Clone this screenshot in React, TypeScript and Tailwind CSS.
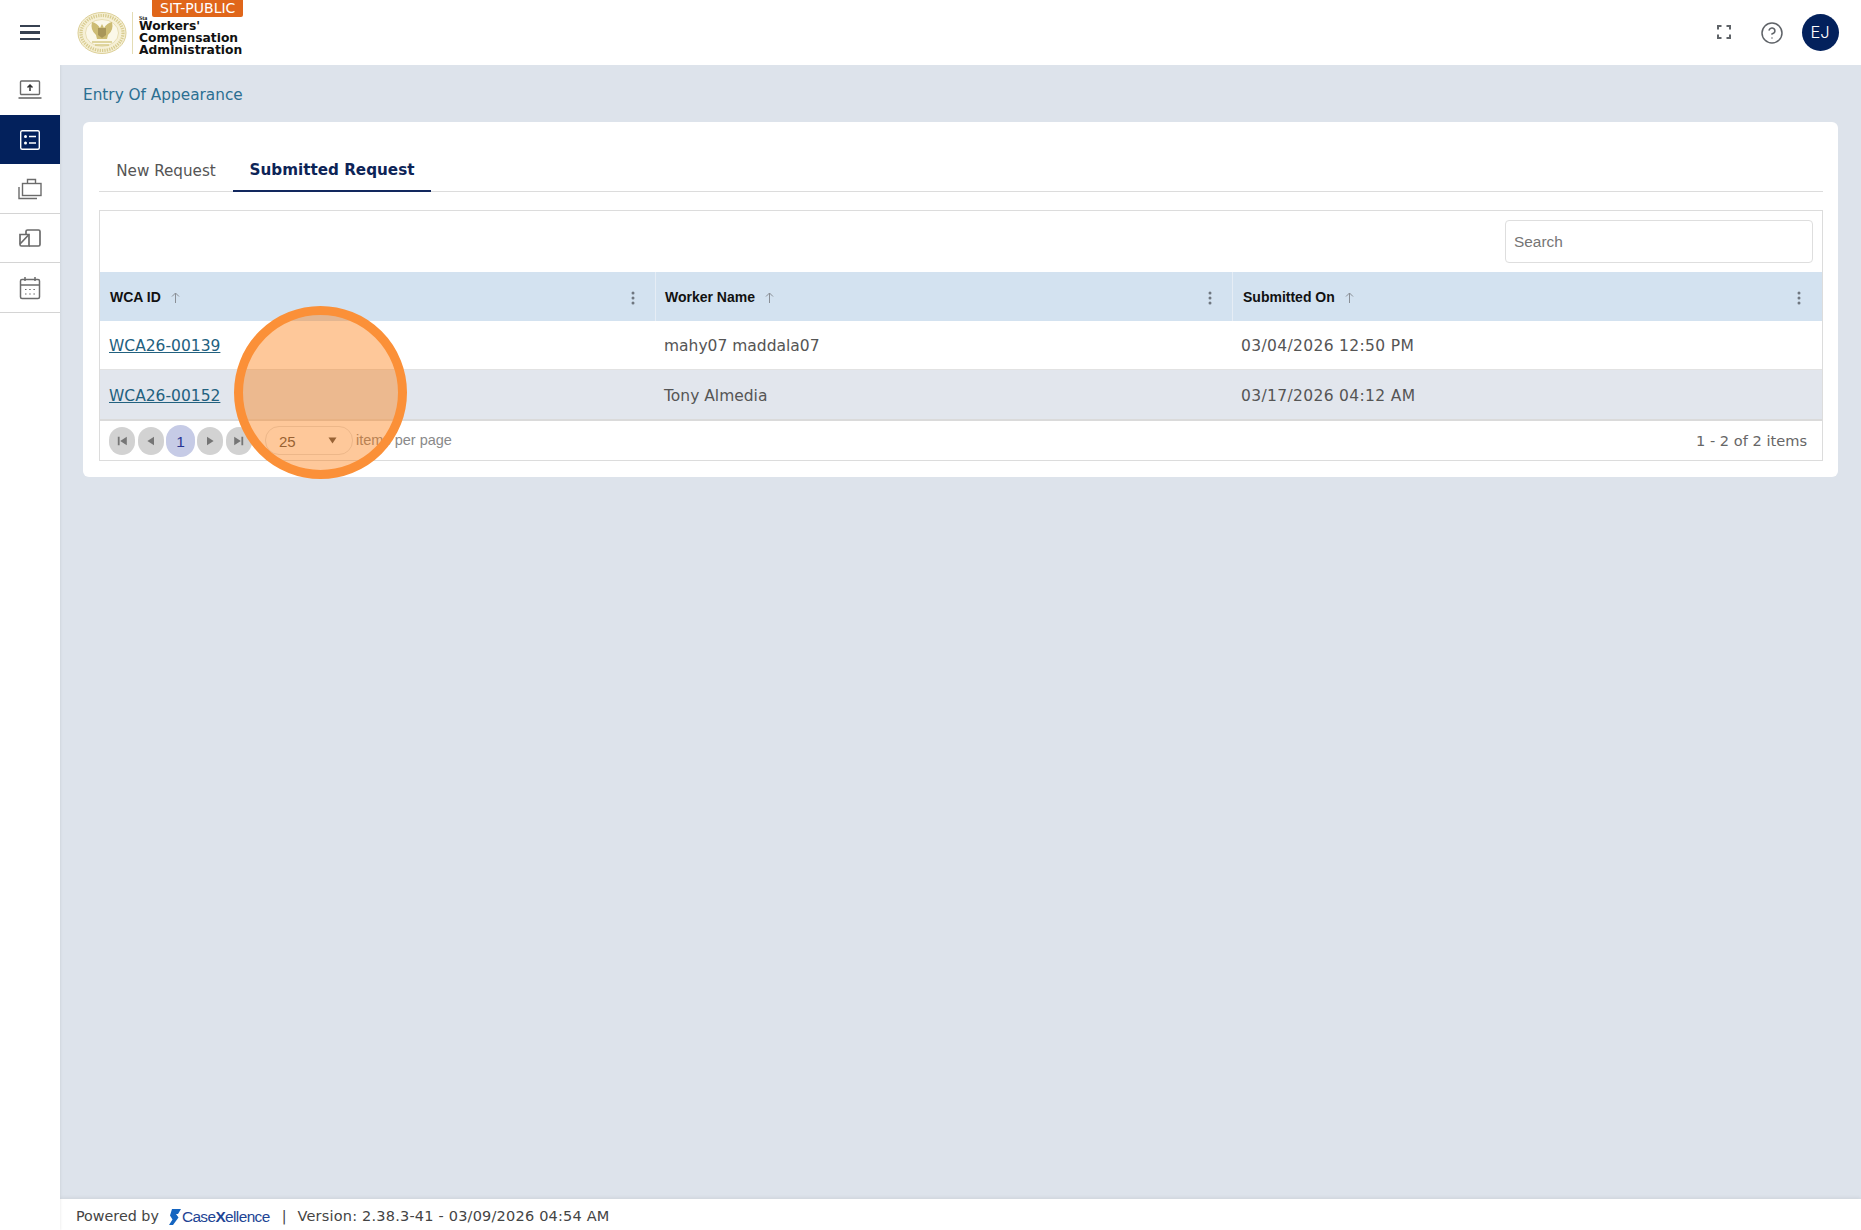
import { CircleHelp } from 'lucide-react';

const dejavu = "font-['DejaVu_Sans',sans-serif]";
const arial = "font-['Liberation_Sans',Arial,sans-serif]";

function SealLogo() {
  return (
    <svg width="50" height="44" viewBox="0 0 50 44" className="shrink-0">
      <ellipse cx="25" cy="22" rx="24" ry="20.5" fill="#f6f0d6" stroke="#dccf96" strokeWidth="1" />
      <ellipse cx="25" cy="22" rx="21" ry="17.5" fill="none" stroke="#d8cc90" strokeWidth="3.2" strokeDasharray="1.3 1.1" />
      <ellipse cx="25" cy="22" rx="16.5" ry="13.5" fill="#fbf8e9" stroke="#dccf96" strokeWidth="0.6" />
      <path d="M15 11 Q20 12 23 17 L25 13 L27 17 Q30 12 35 11 Q37 19 31 24 L30 28 H20 L19 24 Q13 19 15 11 Z" fill="#cdbc74" />
      <path d="M21 17 H29 V24 L25 27 L21 24 Z" fill="#a8965a" />
      <path d="M15 31 H35 M18 34 H32" stroke="#d6c985" strokeWidth="1.6" />
    </svg>
  );
}

function Sidebar() {
  return (
    <aside className="z-10 flex w-[60px] shrink-0 flex-col bg-white shadow-[1px_0_2px_rgba(0,0,0,0.06)]">
      <div className="flex h-[50px] items-center justify-center">
        <svg width="24" height="20" viewBox="0 0 24 20" fill="none" stroke="#6b6b6b" strokeWidth="1.4">
          <rect x="2.5" y="1" width="19" height="13.5" rx="1" />
          <path d="M0.5 18 H23.5" strokeWidth="1.6" />
          <path d="M12 11 V5 M9.5 7.5 L12 5 L14.5 7.5" stroke="#333" strokeWidth="1.5" />
        </svg>
      </div>
      <div className="flex h-[49px] items-center justify-center bg-[#03215c]">
        <svg width="22" height="22" viewBox="0 0 22 22" fill="none" stroke="white" strokeWidth="1.4">
          <rect x="1.7" y="1.7" width="18.6" height="18.6" rx="1.5" />
          <circle cx="6.5" cy="7.5" r="1.5" fill="white" stroke="none" />
          <circle cx="6.5" cy="14" r="1.5" fill="white" stroke="none" />
          <path d="M10 7.5 H17 M10 14 H17" />
        </svg>
      </div>
      <div className="flex h-[50px] items-center justify-center border-b border-[#d4d4d4]">
        <svg width="24" height="22" viewBox="0 0 24 22" fill="none" stroke="#6b6b6b" strokeWidth="1.4">
          <rect x="4.5" y="5.5" width="18.5" height="12" />
          <path d="M9.5 5.5 V1.5 H17.5 V5.5" />
          <path d="M1 9 V20.5 H19" />
        </svg>
      </div>
      <div className="flex h-[49px] items-center justify-center border-b border-[#d4d4d4]">
        <svg width="22" height="18" viewBox="0 0 22 18" fill="none" stroke="#6b6b6b" strokeWidth="1.7">
          <path d="M1 5.5 H10 V17 H2.5 Q1 17 1 15.5 Z" />
          <path d="M7 5.5 V2.5 Q7 1 8.5 1 H19.5 Q21 1 21 2.5 V15.5 Q21 17 19.5 17 H10" />
          <path d="M1 15 L9.5 6" />
        </svg>
      </div>
      <div className="flex h-[50px] items-center justify-center border-b border-[#d4d4d4]">
        <svg width="22" height="24" viewBox="0 0 22 24" fill="none" stroke="#6b6b6b" strokeWidth="1.5">
          <rect x="1.5" y="3.5" width="19" height="19" rx="1.5" />
          <path d="M1.5 9 H20.5" />
          <path d="M6 1 V5 M16 1 V5" />
          <path d="M6 13.5 H7.5 M10.2 13.5 H11.7 M14.4 13.5 H15.9 M6 18 H7.5 M10.2 18 H11.7 M14.4 18 H15.9" strokeWidth="1.2" />
        </svg>
      </div>
    </aside>
  );
}

function SortArrow() {
  return (
    <svg width="9" height="11" viewBox="0 0 9 11" fill="none" stroke="#8a8f96" strokeWidth="1" className="ml-[10px]">
      <path d="M4.5 11 V1 M1 4.5 L4.5 1 L8 4.5" />
    </svg>
  );
}

function Kebab() {
  return (
    <svg width="4" height="14" viewBox="0 0 4 14" fill="#6f7780">
      <circle cx="2" cy="2" r="1.5" />
      <circle cx="2" cy="7" r="1.5" />
      <circle cx="2" cy="12" r="1.5" />
    </svg>
  );
}

function HeaderCell({ label, className }: { label: string; className: string }) {
  return (
    <div className={`flex h-full items-center pt-[2px] ${className}`}>
      <span className={`${arial} text-[14px] font-bold text-[#111]`}>{label}</span>
      <SortArrow />
      <span className="ml-auto">
        <Kebab />
      </span>
    </div>
  );
}

function PagerButton({ d }: { d: string }) {
  return (
    <span className="flex h-[28px] w-[26px] items-center justify-center rounded-full bg-[#d2d2d2]">
      <svg width="12" height="12" viewBox="0 0 10 10" fill="#757575">
        <path d={d} />
      </svg>
    </span>
  );
}

export default function App() {
  return (
    <div className={`${dejavu} flex h-screen w-full flex-col overflow-hidden bg-[#dde3eb]`}>
      <header className="z-20 flex h-[65px] shrink-0 items-center bg-white pl-[20px] pr-[22px]">
        <div className="flex w-[20px] flex-col gap-[4px]">
          <span className="h-[2.5px] bg-[#374151]" />
          <span className="h-[2.5px] bg-[#374151]" />
          <span className="h-[2.5px] bg-[#374151]" />
        </div>
        <div className="relative ml-[37px] flex items-center">
          <SealLogo />
          <span className="ml-[5px] h-[42px] w-px bg-[#e3dcb4]" />
          <div className="relative ml-[6px] pt-[11px] text-[#111]">
            <span className="absolute left-0 top-[5px] font-['Liberation_Serif',serif] text-[6px] font-bold">Sta</span>
            <div className="text-[12.3px] font-bold leading-[12px]">Workers'</div>
            <div className="text-[12.3px] font-bold leading-[12px]">Compensation</div>
            <div className="text-[12.3px] font-bold leading-[12px]">Administration</div>
          </div>
          <span className="absolute left-[75px] top-[-9px] whitespace-nowrap rounded-b-[2px] bg-[#e0661a] px-[8px] text-[14px] leading-[17px] text-white">
            SIT-PUBLIC
          </span>
        </div>
        <div className="ml-auto flex items-center">
          <svg width="14" height="14" viewBox="0 0 14 14" fill="none" stroke="#5f6368" strokeWidth="2" className="mb-[2px]">
            <path d="M1 4.5 V1 H4.5 M9.5 1 H13 V4.5 M13 9.5 V13 H9.5 M4.5 13 H1 V9.5" />
          </svg>
          <CircleHelp size={24} strokeWidth={1.5} color="#5f6368" className="ml-[29px]" />
          <span className="ml-[18px] flex h-[37px] w-[37px] items-center justify-center rounded-full bg-[#03215c] pr-[1px] font-['Inter',sans-serif] text-[16.5px] font-light text-white">
            EJ
          </span>
        </div>
      </header>

      <div className="flex min-h-0 flex-1">
        <Sidebar />
        <div className="flex min-w-0 flex-1 flex-col">
          <main className="relative min-h-0 flex-1 px-[23px]">
            <h1 className="mt-[21px] text-[15.3px] font-normal leading-[18px] text-[#2b6f92]">Entry Of Appearance</h1>
            <section className="mt-[18px] rounded-[6px] bg-white pb-[16px] pl-[16px] pr-[15px] pt-[27px]">
              <div className="flex h-[43px] border-b border-[#dcdcdc] text-[15.2px]">
                <div className="flex w-[134px] items-center justify-center pt-[2px] text-[#555]">New Request</div>
                <div className="mb-[-1px] flex w-[198px] items-center justify-center border-b-2 border-[#12285e] pt-[2px] font-bold text-[#0d2457]">
                  Submitted Request
                </div>
              </div>
              <div className="mt-[18px] border border-[#dcdcdc]">
                <div className="flex h-[61px] items-start justify-end bg-white pr-[9px] pt-[9px]">
                  <input
                    placeholder="Search"
                    className={`${arial} h-[43px] w-[308px] rounded-[4px] border border-[#dedede] bg-white px-[8px] text-[15.4px] outline-none placeholder:text-[#757575]`}
                  />
                </div>
                <div className="grid h-[49px] grid-cols-[556px_577px_1fr] bg-[#d3e2f0]">
                  <HeaderCell label="WCA ID" className="border-r border-[#e6edf5] pl-[10px] pr-[20px]" />
                  <HeaderCell label="Worker Name" className="border-r border-[#e6edf5] pl-[9px] pr-[20px]" />
                  <HeaderCell label="Submitted On" className="pl-[10px] pr-[21px]" />
                </div>
                <div className="grid h-[49px] grid-cols-[556px_577px_1fr] items-center border-b border-[#e2e2e2] bg-white pt-[4px] text-[15.5px] text-[#555]">
                  <a className="pl-[9px] text-[#22617f] underline">WCA26-00139</a>
                  <span className="pl-[8px]">mahy07 maddala07</span>
                  <span className="pl-[8px] tracking-[0.35px]">03/04/2026 12:50 PM</span>
                </div>
                <div className="grid h-[51px] grid-cols-[556px_577px_1fr] items-center border-b-2 border-[#dadada] bg-[#e2e6ed] pt-[5px] text-[15.5px] text-[#555]">
                  <a className="pl-[9px] text-[#22617f] underline">WCA26-00152</a>
                  <span className="pl-[8px]">Tony Almedia</span>
                  <span className="pl-[8px] tracking-[0.35px]">03/17/2026 04:12 AM</span>
                </div>
                <div className="flex h-[39px] items-center bg-white pl-[9px] pr-[15px]">
                  <div className="flex items-center gap-[3px]">
                    <PagerButton d="M1.5 1.5 H3 V8.5 H1.5 Z M9 1.5 V8.5 L3.5 5 Z" />
                    <PagerButton d="M7.5 1.5 V8.5 L2 5 Z" />
                    <span className={`${arial} mx-[-1px] flex h-[32px] w-[29px] items-center justify-center rounded-full bg-[#c6cbe6] pt-[2px] text-[15.5px] text-[#283593]`}>1</span>
                    <PagerButton d="M2.5 1.5 V8.5 L8 5 Z" />
                    <PagerButton d="M1 1.5 V8.5 L6.5 5 Z M7 1.5 H8.5 V8.5 H7 Z" />
                  </div>
                  <div className={`${arial} ml-[13px] flex h-[29px] w-[88px] items-center justify-between rounded-[14px] border border-[#e3e3e3] pl-[13px] pr-[15px] text-[15px] text-[#555]`}>
                    <span className="pt-[3px]">25</span>
                    <svg width="9" height="7" viewBox="0 0 9 7" fill="#555">
                      <path d="M0.5 0.5 H8.5 L4.5 6.5 Z" />
                    </svg>
                  </div>
                  <span className={`${arial} ml-[3px] text-[14.5px] text-[#8a8a8a]`}>items per page</span>
                  <span className="ml-auto text-[14.6px] text-[#666]">1 - 2 of 2 items</span>
                </div>
              </div>
            </section>
            <div className="absolute left-[174px] top-[241px] h-[173px] w-[173px] rounded-full border-[9px] border-[#fb9038] bg-[rgba(253,117,3,0.4)]" />
          </main>
          <footer className="flex h-[31px] shrink-0 items-center bg-white pl-[16px] pt-[4px] text-[14.3px] text-[#444] shadow-[0_-1px_4px_rgba(0,0,0,0.08)]">
            <span>Powered by</span>
            <svg width="12" height="16" viewBox="0 0 12 16" fill="#1565c0" className="ml-[10px]">
              <path d="M3 0 H12 L9 5 H7 L9.5 8.5 L4 16 H0 L3.5 10.5 L1 6.5 Z" />
            </svg>
            <span className={`${arial} ml-[1px] text-[15.4px] tracking-[-0.6px] text-[#1d4494]`}>
              Case<span className="font-bold">X</span>ellence
            </span>
            <span className="ml-[12px]">|</span>
            <span className="ml-[11px] text-[14.5px] tracking-[0.2px]">Version: 2.38.3-41 - 03/09/2026 04:54 AM</span>
          </footer>
        </div>
      </div>
    </div>
  );
}
